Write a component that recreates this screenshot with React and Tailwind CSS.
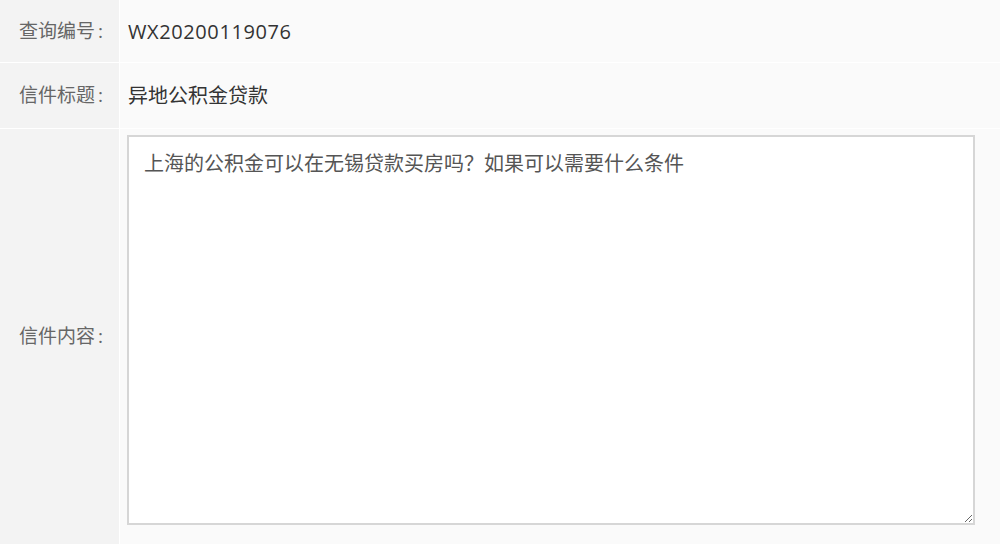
const rows = [
  { label: '查询编号', value: 'WX20200119076', h: 'h-[62px]', extra: 'tracking-[0.6px]' },
  { label: '信件标题', value: '异地公积金贷款', h: 'h-[65px]', extra: '' },
];

const Label = ({ children }) => (
  <div className="flex w-[119px] shrink-0 items-center bg-[#f3f3f3] pl-[19px] text-[19px] text-[#666]">
    {children}
    <span className="ml-[3px]">:</span>
  </div>
);

export default function App() {
  return (
    <div
      className="flex h-screen w-full flex-col gap-px bg-white"
      style={{ fontFamily: '"Open Sans", "Noto Sans CJK SC", sans-serif' }}
    >
      {rows.map((r) => (
        <div key={r.label} className={`flex ${r.h} gap-px`}>
          <Label>{r.label}</Label>
          <div className={`flex flex-1 items-center bg-[#fafafa] pl-[8px] pt-[1px] text-[20px] text-[#333] ${r.extra}`}>
            {r.value}
          </div>
        </div>
      ))}
      <div className="flex flex-1 gap-px">
        <Label>信件内容</Label>
        <div className="flex flex-1 bg-[#fafafa] pb-[19px] pl-[7px] pr-[25px] pt-[6px]">
          <textarea
            readOnly
            defaultValue="上海的公积金可以在无锡贷款买房吗？如果可以需要什么条件"
            className="h-full w-full resize border-2 border-[#d6d6d6] bg-white px-[15px] py-[12px] text-[20px] leading-[30px] text-[#555] outline-none"
            style={{ fontFamily: '"Liberation Serif", "Noto Sans CJK SC", serif' }}
          />
        </div>
      </div>
    </div>
  );
}
